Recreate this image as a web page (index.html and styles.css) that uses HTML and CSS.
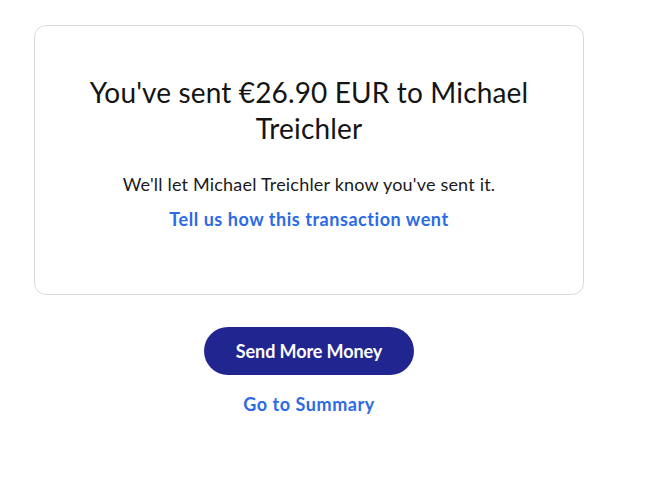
FILE: index.html
```html
<!DOCTYPE html>
<html lang="en">
<head>
<meta charset="utf-8">
<title>Sent</title>
<link rel="stylesheet" href="styles.css">
</head>
<body>
<main class="page">
  <section class="card">
    <h1 class="title">You've sent €26.90 EUR to Michael Treichler</h1>
    <p class="note">We'll let Michael Treichler know you've sent it.</p>
    <a class="link" href="#">Tell us how this transaction went</a>
  </section>
  <div class="actions">
    <button class="primary" type="button">Send More Money</button>
    <a class="link" href="#">Go to Summary</a>
  </div>
</main>
</body>
</html>
```
FILE: styles.css
```css
html, body {
  margin: 0;
  padding: 0;
  background: #ffffff;
}
body {
  font-family: Lato, "Noto Sans", sans-serif;
  color: #111111;
}
.page {
  width: 550px;
  margin-left: 34px;
  padding-top: 25px;
  display: flex;
  flex-direction: column;
  align-items: center;
}
.card {
  box-sizing: border-box;
  width: 100%;
  height: 270px;
  border: 1px solid #dcdad2;
  border-radius: 12px;
  display: flex;
  flex-direction: column;
  align-items: center;
  padding: 48px 40px 0;
  text-align: center;
}
.title {
  margin: 0;
  font-size: 28px;
  font-weight: 400;
  line-height: 36px;
  letter-spacing: 0.15px;
  color: #141414;
}
.note {
  margin: 27px 0 0;
  font-size: 18px;
  line-height: 22px;
  letter-spacing: 0.2px;
  color: #1a1a1a;
}
.link {
  display: block;
  margin-top: 13px;
  font-size: 18px;
  line-height: 22px;
  font-weight: 700;
  letter-spacing: 0.55px;
  color: #2b6be6;
  text-decoration: none;
}
.actions {
  display: flex;
  flex-direction: column;
  align-items: center;
  margin-top: 32px;
}
.primary {
  width: 210px;
  height: 48px;
  border: none;
  border-radius: 24px;
  background: #212590;
  color: #ffffff;
  font-family: inherit;
  font-size: 18px;
  font-weight: 700;
  letter-spacing: -0.1px;
  padding: 0;
}
.actions .link {
  margin-top: 18px;
}
```
